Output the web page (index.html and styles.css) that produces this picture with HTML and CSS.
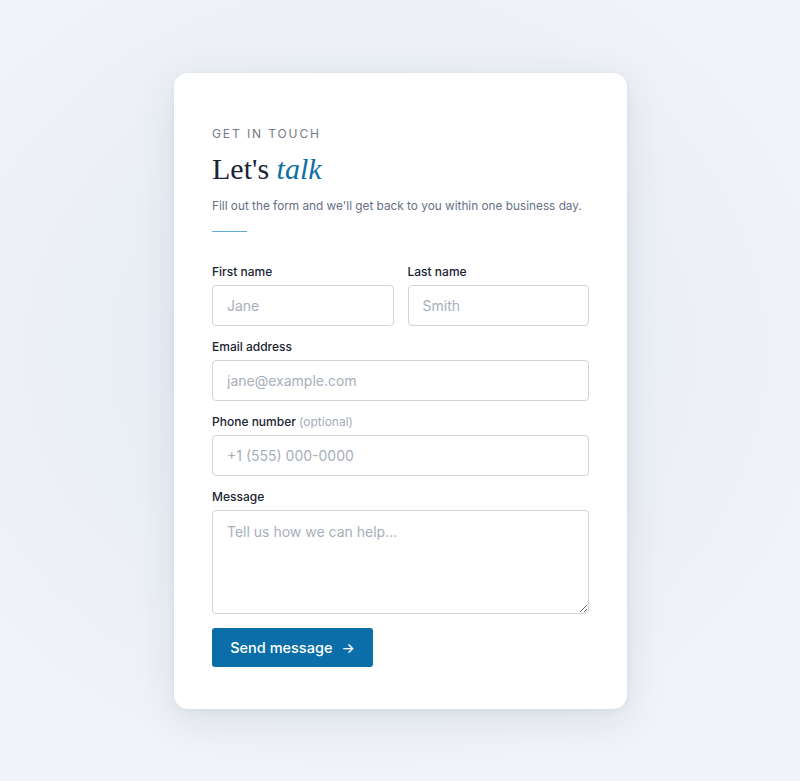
FILE: index.html
```html
<!DOCTYPE html>
<html lang="en">
<head>
<meta charset="utf-8">
<title>Contact</title>
<link rel="stylesheet" href="styles.css">
</head>
<body>
<main class="page">
  <form class="card">
    <p class="eyebrow">GET IN TOUCH</p>
    <h1 class="title">Let's <em>talk</em></h1>
    <p class="lead">Fill out the form and we'll get back to you within one business day.</p>
    <div class="rule"></div>
    <div class="row">
      <label class="field">
        <span class="label">First name</span>
        <input class="input" type="text" placeholder="Jane">
      </label>
      <label class="field">
        <span class="label">Last name</span>
        <input class="input" type="text" placeholder="Smith">
      </label>
    </div>
    <label class="field">
      <span class="label">Email address</span>
      <input class="input" type="email" placeholder="jane@example.com">
    </label>
    <label class="field">
      <span class="label">Phone number <span class="opt">(optional)</span></span>
      <input class="input" type="tel" placeholder="+1 (555) 000-0000">
    </label>
    <label class="field">
      <span class="label">Message</span>
      <textarea class="input area" placeholder="Tell us how we can help..."></textarea>
    </label>
    <div class="actions">
      <button class="btn" type="button">Send message <span class="arrow">→</span></button>
    </div>
  </form>
</main>
</body>
</html>
```

FILE: styles.css
```css
* { box-sizing: border-box; }
html, body { margin: 0; padding: 0; }
body {
  font-family: "Inter", "Noto Sans", sans-serif;
  background: radial-gradient(ellipse 60% 55% at 45% 45%, #e2e9f0 0%, #eaeff5 55%, #f0f3f7 100%);
  min-height: 781px;
}
.page {
  display: flex;
  justify-content: center;
  padding-top: 73px;
  padding-left: 1px;
}
.card {
  width: 453px;
  background: #fff;
  border-radius: 14px;
  padding: 54px 38px 42px;
  box-shadow: 0 10px 40px rgba(30, 60, 90, 0.10), 0 2px 6px rgba(30, 60, 90, 0.06);
  display: flex;
  flex-direction: column;
}
.eyebrow {
  margin: 0;
  font-size: 12px;
  line-height: 14px;
  letter-spacing: 1.9px;
  color: #737b87;
}
.title {
  margin: 8px 0 0;
  font-family: "Liberation Serif", "DejaVu Serif", serif;
  font-weight: 400;
  font-size: 30px;
  line-height: 40px;
  color: #1b2437;
}
.title em {
  color: #0d6fa6;
  font-style: italic;
}
.lead {
  margin: 8px 0 0;
  font-size: 11.8px;
  line-height: 18px;
  color: #667085;
  white-space: nowrap;
}
.rule {
  width: 35px;
  height: 1px;
  background: #5faad6;
  margin: 16px 0 32px;
}
.row {
  display: grid;
  grid-template-columns: 1fr 1fr;
  gap: 14px;
}
.field {
  display: flex;
  flex-direction: column;
  margin-bottom: 13px;
}
.label {
  font-size: 12px;
  line-height: 15px;
  font-weight: 500;
  color: #1d2433;
  margin-bottom: 6px;
}
.opt {
  font-weight: 400;
  color: #a3abb7;
}
.input {
  width: 100%;
  height: 41px;
  border: 1px solid #cfd4da;
  border-radius: 4px;
  padding: 0 14px;
  font-family: inherit;
  font-size: 14px;
  color: #1d2433;
  background: #fff;
  outline: none;
}
.input::placeholder { color: #a7afba; }
.area {
  height: 104px;
  padding-top: 12px;
  resize: vertical;
  font-size: 14px;
}
.actions { display: flex; margin-top: 1px; }
.btn {
  width: 161px;
  height: 39px;
  border: 0;
  border-radius: 3px;
  background: #0b6ea8;
  color: #fff;
  font-family: inherit;
  font-size: 14.5px;
  font-weight: 500;
  display: flex;
  align-items: center;
  justify-content: center;
  gap: 9px;
}
.arrow { font-size: 14px; }
```
